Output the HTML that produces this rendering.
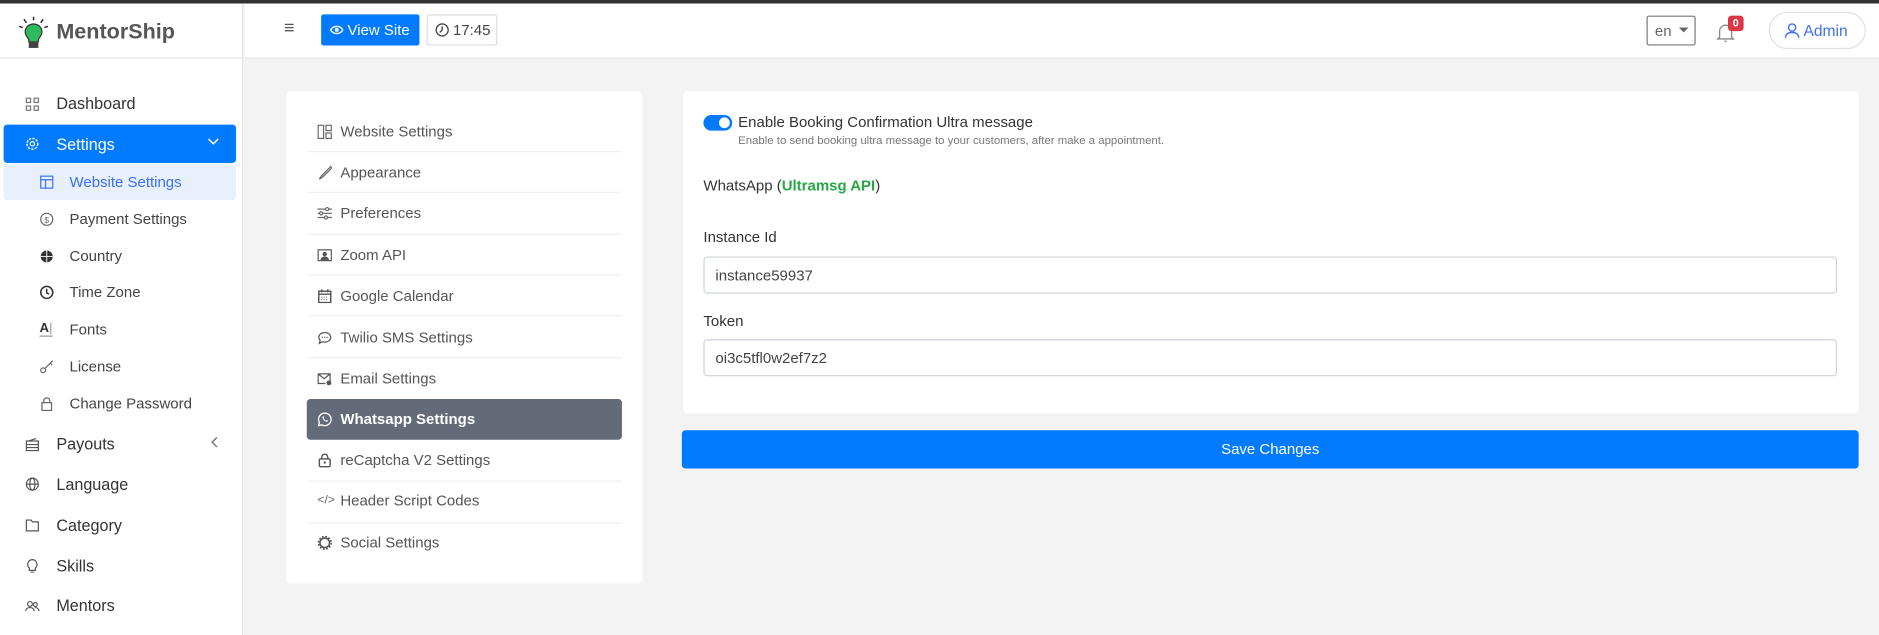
<!DOCTYPE html>
<html><head><meta charset="utf-8"><style>
*{box-sizing:border-box;margin:0;padding:0}
html,body{width:1879px;height:635px;overflow:hidden;background:#f3f3f3;font-family:"Liberation Sans",sans-serif}
#w{position:absolute;left:0;top:0;width:1568px;height:530px;transform:scale(1.19834);transform-origin:0 0;background:#f3f3f3}
.a{position:absolute}
.t{position:absolute;white-space:nowrap}
.side{left:0;top:3px;width:203px;height:527px;background:#fff;border-right:1px solid #e6e6e6}
.hdr{left:203px;top:3px;width:1365px;height:46px;background:#fff;border-bottom:1px solid #e2e2e2}
.si{position:absolute;left:47px;font-size:13.5px;color:#333}
.sub{position:absolute;left:58px;font-size:12.5px;color:#444}
.ic{position:absolute;width:12px;height:12px}
.li{position:absolute;left:284px;font-size:12.5px;color:#555}
.sep{position:absolute;left:256px;width:263px;height:1px;background:#f0f0f0}
</style></head><body><div id="w">
<div class="a" style="left:0;top:0;width:1568px;height:3px;background:#333"></div>
<div class="a side"></div>
<div class="a hdr"></div>
<div class="a" style="left:203px;top:3px;width:1px;height:46px;background:#eee"></div>
<div class="a" style="left:0;top:48px;width:203px;height:1px;background:#e6e6e6"></div>
<!-- logo -->
<svg class="a" style="left:14px;top:13px" width="28" height="30" viewBox="0 0 28 30"><g stroke="#333" stroke-width="1.3"><line x1="14" y1="1" x2="14" y2="4"/><line x1="6" y1="3" x2="8" y2="6"/><line x1="22" y1="3" x2="20" y2="6"/><line x1="2" y1="9" x2="5" y2="10"/><line x1="26" y1="9" x2="23" y2="10"/></g><path d="M14 7c-4 0-7 3-7 6.5 0 3 2 4.5 3 6.5v2h8v-2c1-2 3-3.5 3-6.5C21 10 18 7 14 7z" fill="#2dbb5d" stroke="#333" stroke-width="1"/><rect x="10" y="22" width="8" height="5" fill="#444"/></svg>
<div class="t" style="left:47px;top:16px;font-size:18px;font-weight:bold;color:#555">MentorShip</div>
<!-- header -->
<div class="t" style="left:237px;top:15px;font-size:15px;color:#555">≡</div>
<div class="a" style="left:268px;top:12px;width:82px;height:26px;background:#007bff;border-radius:2px"></div>
<svg class="a" style="left:275px;top:20px" width="12" height="10" viewBox="0 0 12 10"><path d="M1 5C3 1 9 1 11 5 9 9 3 9 1 5z" fill="none" stroke="#fff" stroke-width="1.2"/><circle cx="6" cy="5" r="1.6" fill="#fff"/></svg>
<div class="t" style="left:290px;top:18px;font-size:12.5px;color:#fff">View Site</div>
<div class="a" style="left:356px;top:12px;width:59px;height:26px;border:1px solid #ddd;border-radius:2px;background:#fff"></div>
<svg class="a" style="left:363px;top:19px" width="12" height="12" viewBox="0 0 12 12"><circle cx="6" cy="6" r="5" fill="none" stroke="#444" stroke-width="1.1"/><path d="M6 3v3l-2 2" fill="none" stroke="#444" stroke-width="1.1"/></svg>
<div class="t" style="left:378px;top:18px;font-size:12.5px;color:#444">17:45</div>
<div class="a" style="left:1374px;top:13px;width:41px;height:25px;border:1px solid #777;border-radius:2px;background:#fff"></div>
<div class="t" style="left:1381px;top:19px;font-size:12.5px;color:#666">en</div>
<div class="a" style="left:1401px;top:23px;border:4px solid transparent;border-top:4px solid #666;border-bottom:0"></div>
<svg class="a" style="left:1432px;top:17px" width="16" height="19" viewBox="0 0 16 19"><path d="M3 14V9a5 5 0 0 1 10 0v5l1.5 1.5h-13z" fill="none" stroke="#888" stroke-width="1.1"/><path d="M6.5 17h3l-1.5 1.5z" fill="#888"/></svg>
<div class="a" style="left:1442px;top:13px;width:13px;height:13px;background:#dc3545;border-radius:3px;color:#fff;font-size:9px;font-weight:bold;text-align:center;line-height:13px">0</div>
<div class="a" style="left:1476px;top:10px;width:81px;height:31px;border:1px solid #e0e0e0;border-radius:16px;background:#fff"></div>
<svg class="a" style="left:1489px;top:19px" width="13" height="13" viewBox="0 0 13 13"><circle cx="6.5" cy="4" r="3" fill="none" stroke="#3d6ef5" stroke-width="1.2"/><path d="M1 12.5c0-3 2.5-4.5 5.5-4.5s5.5 1.5 5.5 4.5" fill="none" stroke="#3d6ef5" stroke-width="1.2"/></svg>
<div class="t" style="left:1505px;top:18px;font-size:13px;color:#3d6ef5">Admin</div>
<!-- sidebar -->
<svg class="ic" style="left:21px;top:81px" viewBox="0 0 12 12"><g fill="none" stroke="#777"><rect x="1" y="1" width="3.5" height="3.5"/><rect x="7.5" y="1" width="3.5" height="3.5"/><rect x="1" y="7.5" width="3.5" height="3.5"/><rect x="7.5" y="7.5" width="3.5" height="3.5"/></g></svg>
<div class="si" style="top:79px">Dashboard</div>
<div class="a" style="left:3px;top:104px;width:194px;height:32px;background:#007bff;border-radius:3px"></div>
<svg class="ic" style="left:21px;top:114px" viewBox="0 0 12 12"><circle cx="6" cy="6" r="4.5" fill="none" stroke="#fff" stroke-width="1.2" stroke-dasharray="2 1"/><circle cx="6" cy="6" r="1.8" fill="none" stroke="#fff"/></svg>
<div class="si" style="top:113px;color:#fff">Settings</div>
<svg class="a" style="left:173px;top:115px" width="10" height="7" viewBox="0 0 10 7"><path d="M1 1l4 4 4-4" fill="none" stroke="#fff" stroke-width="1.3"/></svg>
<div class="a" style="left:3px;top:137px;width:194px;height:30px;background:#e8f0fe;border-radius:3px"></div>
<svg class="ic" style="left:33px;top:146px" viewBox="0 0 12 12"><g fill="none" stroke="#3d6ef5"><rect x="1" y="1" width="10" height="10"/><line x1="1" y1="4" x2="11" y2="4"/><line x1="5" y1="4" x2="5" y2="11"/></g></svg>
<div class="sub" style="top:145px;color:#3d6ef5">Website Settings</div>
<svg class="ic" style="left:33px;top:177px" viewBox="0 0 12 12"><circle cx="6" cy="6" r="5" fill="none" stroke="#666"/><text x="6" y="9" font-size="7" text-anchor="middle" fill="#666">$</text></svg>
<div class="sub" style="top:176px">Payment Settings</div>
<svg class="ic" style="left:33px;top:208px" viewBox="0 0 12 12"><circle cx="6" cy="6" r="5" fill="#333"/><path d="M1 6h10M6 1v10" stroke="#fff" stroke-width=".8"/></svg>
<div class="sub" style="top:207px">Country</div>
<svg class="ic" style="left:33px;top:238px" viewBox="0 0 12 12"><circle cx="6" cy="6" r="5" fill="none" stroke="#333" stroke-width="1.3"/><path d="M6 3v3.5l2 1" fill="none" stroke="#333" stroke-width="1.2"/></svg>
<div class="sub" style="top:237px">Time Zone</div>
<div class="t" style="left:33px;top:268px;font-size:11px;font-weight:bold;color:#333;border-bottom:1px solid #999">A<span style="font-weight:normal;color:#999">|</span></div>
<div class="sub" style="top:268px">Fonts</div>
<svg class="ic" style="left:33px;top:300px" viewBox="0 0 12 12"><circle cx="3" cy="9" r="2" fill="none" stroke="#666"/><path d="M4.5 7.5L11 1M9 3l1.5 1.5" stroke="#666" fill="none"/></svg>
<div class="sub" style="top:299px">License</div>
<svg class="ic" style="left:33px;top:331px" viewBox="0 0 12 12"><rect x="2" y="5" width="8" height="6.5" fill="none" stroke="#666"/><path d="M3.5 5V3.5a2.5 2.5 0 0 1 5 0V5" fill="none" stroke="#666"/></svg>
<div class="sub" style="top:330px">Change Password</div>
<svg class="ic" style="left:21px;top:365px" viewBox="0 0 12 12"><rect x="1" y="3" width="10" height="8" fill="none" stroke="#555"/><path d="M1 6h10M1 8.5h10M3 3l6-2" stroke="#555" fill="none"/></svg>
<div class="si" style="top:363px">Payouts</div>
<svg class="a" style="left:176px;top:364px" width="6" height="10" viewBox="0 0 6 10"><path d="M5 1L1 5l4 4" fill="none" stroke="#777" stroke-width="1.2"/></svg>
<svg class="ic" style="left:21px;top:398px" viewBox="0 0 12 12"><g fill="none" stroke="#555"><circle cx="6" cy="6" r="5"/><ellipse cx="6" cy="6" rx="2.2" ry="5"/><path d="M1 6h10"/></g></svg>
<div class="si" style="top:397px">Language</div>
<svg class="ic" style="left:21px;top:432px" viewBox="0 0 12 12"><path d="M1 2h4l1 1.5h5V11H1z" fill="none" stroke="#555"/></svg>
<div class="si" style="top:431px">Category</div>
<svg class="ic" style="left:21px;top:466px" viewBox="0 0 12 12"><path d="M6 1a4 4 0 0 0-2.5 7V10h5V8A4 4 0 0 0 6 1z" fill="none" stroke="#555"/><path d="M4.5 11.5h3" stroke="#555"/></svg>
<div class="si" style="top:465px">Skills</div>
<svg class="ic" style="left:21px;top:500px" viewBox="0 0 12 12"><g fill="none" stroke="#555"><circle cx="4" cy="4" r="2"/><circle cx="8.5" cy="4.5" r="1.6"/><path d="M0.5 10c0-2 1.5-3 3.5-3s3.5 1 3.5 3M8 7c2 0 3.5 1 3.5 3"/></g></svg>
<div class="si" style="top:498px">Mentors</div>
<!-- left card -->
<div class="a" style="left:239px;top:76px;width:297px;height:411px;background:#fff;border-radius:4px"></div>
<svg class="ic" style="left:265px;top:104px" viewBox="0 0 12 12"><g fill="none" stroke="#666"><rect x=".5" y=".5" width="4.5" height="11"/><rect x="7" y=".5" width="4.5" height="4.5"/><rect x="7" y="7" width="4.5" height="4.5"/></g></svg>
<div class="li" style="top:103px">Website Settings</div>
<div class="sep" style="top:126px"></div>
<svg class="ic" style="left:265px;top:138px" viewBox="0 0 12 12"><path d="M11 1L3 9l-1.5 2.5L4 10l8-8z" fill="none" stroke="#666"/></svg>
<div class="li" style="top:137px">Appearance</div>
<div class="sep" style="top:160px"></div>
<svg class="ic" style="left:265px;top:172px" viewBox="0 0 12 12"><g fill="none" stroke="#666"><path d="M0 2.5h12M0 6h12M0 9.5h12"/><circle cx="8" cy="2.5" r="1.3" fill="#fff"/><circle cx="3" cy="6" r="1.3" fill="#fff"/><circle cx="7" cy="9.5" r="1.3" fill="#fff"/></g></svg>
<div class="li" style="top:171px">Preferences</div>
<div class="sep" style="top:195px"></div>
<svg class="ic" style="left:265px;top:207px" viewBox="0 0 12 12"><rect x=".5" y="1.5" width="11" height="9" fill="none" stroke="#555"/><circle cx="6" cy="5" r="1.8" fill="#555"/><path d="M2.5 10c0-2 2-3 3.5-3s3.5 1 3.5 3" fill="#555"/></svg>
<div class="li" style="top:206px">Zoom API</div>
<div class="sep" style="top:229px"></div>
<svg class="ic" style="left:265px;top:241px" viewBox="0 0 12 12"><rect x="1" y="2" width="10" height="9.5" fill="none" stroke="#555" stroke-width="1.2"/><path d="M1 4.5h10M3.5 0.5v2.5M8.5 .5v2.5" stroke="#555" stroke-width="1.2"/><path d="M3 7h6M3 9h6" stroke="#888" stroke-dasharray="1 1"/></svg>
<div class="li" style="top:240px">Google Calendar</div>
<div class="sep" style="top:263px"></div>
<svg class="ic" style="left:265px;top:276px" viewBox="0 0 12 12"><path d="M6 1.5c3 0 5 1.8 5 4s-2 4-5 4c-.7 0-1.3 0-2-.3L1.5 10.5 2.2 8C1.4 7.3 1 6.5 1 5.5c0-2.2 2-4 5-4z" fill="none" stroke="#555"/><path d="M3.5 5.5h1M5.5 5.5h1M7.5 5.5h1" stroke="#555"/></svg>
<div class="li" style="top:275px">Twilio SMS Settings</div>
<div class="sep" style="top:298px"></div>
<svg class="ic" style="left:265px;top:310px" viewBox="0 0 12 12"><path d="M.5 2h10v6M.5 2v8h6M.5 2l5 4 5-4" fill="none" stroke="#555"/><circle cx="9.5" cy="9.5" r="2" fill="#555"/></svg>
<div class="li" style="top:309px">Email Settings</div>
<div class="a" style="left:256px;top:333px;width:263px;height:34px;background:#636b78;border-radius:3px"></div>
<svg class="ic" style="left:265px;top:344px" viewBox="0 0 12 12"><path d="M6 .8a5.2 5.2 0 0 0-4.5 7.8L.8 11.2l2.7-.7A5.2 5.2 0 1 0 6 .8z" fill="none" stroke="#fff" stroke-width="1.1"/><path d="M4 3.8c0 2 1.8 4 4 4.2l.7-1-1-.5-.6.5C6 6.5 5.5 6 5.2 5l.5-.6-.5-1z" fill="#fff"/></svg>
<div class="li" style="top:343px;color:#fff;font-weight:bold">Whatsapp Settings</div>
<svg class="ic" style="left:265px;top:378px" viewBox="0 0 12 12"><rect x="1.5" y="5" width="9" height="6.5" rx="1" fill="none" stroke="#555" stroke-width="1.2"/><path d="M3.5 5V3.5a2.5 2.5 0 0 1 5 0V5" fill="none" stroke="#555" stroke-width="1.2"/><circle cx="6" cy="8" r="1" fill="#555"/></svg>
<div class="li" style="top:377px">reCaptcha V2 Settings</div>
<div class="sep" style="top:401px"></div>
<div class="t" style="left:265px;top:412px;font-size:10px;color:#666">&lt;/&gt;</div>
<div class="li" style="top:411px">Header Script Codes</div>
<div class="sep" style="top:436px"></div>
<svg class="ic" style="left:265px;top:447px" viewBox="0 0 12 12"><circle cx="6" cy="6" r="4" fill="none" stroke="#555" stroke-width="1.3"/><circle cx="6" cy="6" r="5.3" fill="none" stroke="#555" stroke-width="1.3" stroke-dasharray="1.5 1.3"/></svg>
<div class="li" style="top:446px">Social Settings</div>
<!-- right card -->
<div class="a" style="left:570px;top:76px;width:981px;height:269px;background:#fff;border-radius:4px"></div>
<div class="a" style="left:587px;top:96px;width:24px;height:13px;background:#007bff;border-radius:7px"></div>
<div class="a" style="left:600px;top:98px;width:9px;height:9px;background:#fff;border-radius:50%"></div>
<div class="t" style="left:616px;top:95px;font-size:12.5px;color:#333">Enable Booking Confirmation Ultra message</div>
<div class="t" style="left:616px;top:112px;font-size:9.5px;color:#777">Enable to send booking ultra message to your customers, after make a appointment.</div>
<div class="t" style="left:587px;top:148px;font-size:12.5px;color:#333">WhatsApp (<b style="color:#28a745">Ultramsg API</b>)</div>
<div class="t" style="left:587px;top:191px;font-size:12.5px;color:#333">Instance Id</div>
<div class="a" style="left:587px;top:214px;width:946px;height:31px;border:1px solid #ced4da;border-radius:3px"></div>
<div class="t" style="left:597px;top:223px;font-size:12.5px;color:#444">instance59937</div>
<div class="t" style="left:587px;top:261px;font-size:12.5px;color:#333">Token</div>
<div class="a" style="left:587px;top:283px;width:946px;height:31px;border:1px solid #ced4da;border-radius:3px"></div>
<div class="t" style="left:597px;top:292px;font-size:12.5px;color:#444">oi3c5tfl0w2ef7z2</div>
<div class="a" style="left:569px;top:359px;width:982px;height:32px;background:#007bff;border-radius:3px;color:#fff;font-size:12.5px;text-align:center;line-height:32px">Save Changes</div>
</div></body></html>
